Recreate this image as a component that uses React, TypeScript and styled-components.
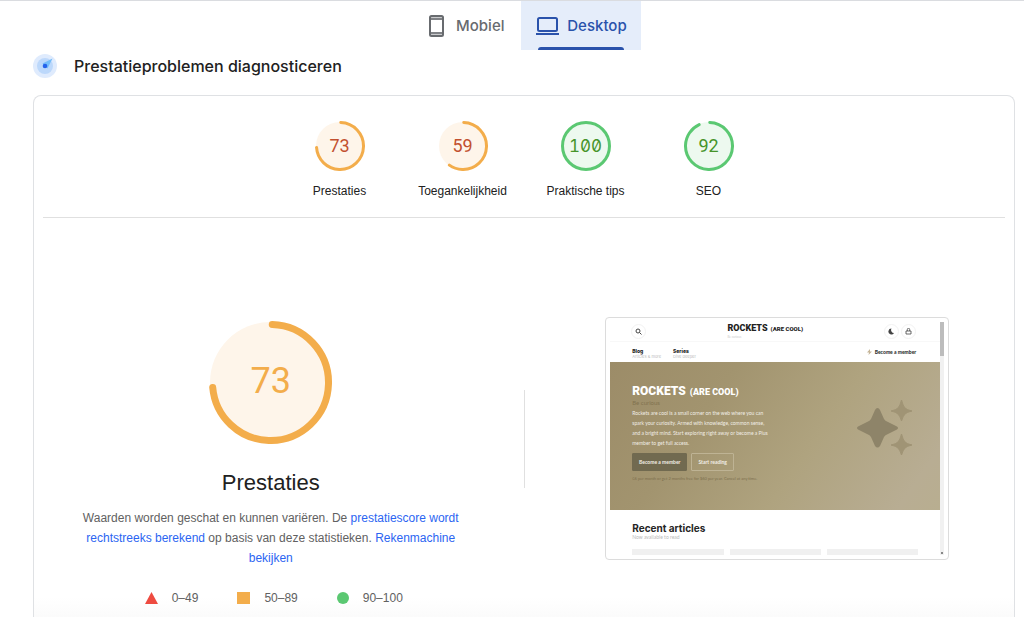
import React from "react";
import styled, { createGlobalStyle } from "styled-components";

const sans = `"Liberation Sans", Arial, sans-serif`;
const brand = `Inter, Roboto, sans-serif`;

const GlobalStyle = createGlobalStyle`
  *, *::before, *::after { box-sizing: border-box; }
  body { margin: 0; background: #fff; color: #212121; font-family: ${sans}; }
  h1, h2, h3, p { margin: 0; font-weight: 400; }
  a { color: #2b65f2; text-decoration: none; }
`;

const Page = styled.div`
  display: flex;
  flex-direction: column;
  min-height: 100vh;
  padding: 0 9px 0 33px;
  border-top: 1px solid #dadce0;
`;

const Tabs = styled.nav`
  display: flex;
  justify-content: center;
`;

const Tab = styled.button<{ $active?: boolean }>`
  display: flex;
  flex-direction: column;
  align-items: center;
  justify-content: flex-end;
  height: 49px;
  padding: 0 14px;
  border: 0;
  background: ${(p) => (p.$active ? "#e5edfa" : "transparent")};
  color: ${(p) => (p.$active ? "#2a52ab" : "#686b6f")};
  font: 500 15px ${brand};
`;

const TabLabel = styled.span`
  display: flex;
  align-items: center;
  gap: 8px;
  flex: 1;
`;

const TabBar = styled.span<{ $active?: boolean }>`
  width: 86px;
  height: 3px;
  margin-top: -3px;
  border-radius: 3px 3px 0 0;
  background: ${(p) => (p.$active ? "#2a52ab" : "transparent")};
`;

const Heading = styled.header`
  display: flex;
  align-items: center;
  gap: 17px;
  height: 32px;
  margin-bottom: 13px;
`;

const HeadingTitle = styled.h1`
  font: 500 16px/24px ${brand};
`;

const Card = styled.main`
  display: flex;
  flex-direction: column;
  flex: 1;
  padding: 0 9px;
  border: 1px solid #dfe1e4;
  border-bottom: 0;
  border-radius: 8px 8px 0 0;
  background: linear-gradient(to top, #fbfbfb, #fff 20px);
`;

const Scores = styled.section`
  display: flex;
  justify-content: center;
  height: 122px;
  padding-top: 25px;
  border-bottom: 1px solid #e0e0e0;
`;

const Score = styled.a`
  display: flex;
  flex-direction: column;
  align-items: center;
  width: 123px;
  color: #212121;
  font-size: 12px;
  line-height: 16px;
  gap: 12px;
`;

const Dial = styled.div<{ $size: number }>`
  display: grid;
  place-items: center;
  width: ${(p) => p.$size}px;
  height: ${(p) => p.$size}px;
  & > * { grid-area: 1 / 1; }
`;

const Value = styled.span<{ $color: string; $large?: boolean }>`
  padding-bottom: ${(p) => (p.$large ? 4 : 0)}px;
  color: ${(p) => p.$color};
  font-family: Roboto, sans-serif;
  font-weight: 400;
  font-size: ${(p) => (p.$large ? 36 : 18)}px;
  line-height: ${(p) => (p.$large ? 40 : 20)}px;
`;

const SlashedValue = styled(Value)`
  font-family: Inter, sans-serif;
  font-size: 17px;
  font-feature-settings: "zero", "tnum";
`;

const Report = styled.section`
  display: grid;
  grid-template-columns: 1fr 1px 1fr;
  column-gap: 25px;
  align-items: start;
  padding-top: 99px;
`;

const Summary = styled.div`
  display: flex;
  flex-direction: column;
  align-items: center;
  padding: 4px 0 8px;
`;

const SummaryTitle = styled.h2`
  margin: 25px 0 11px;
  font-size: 22px;
  line-height: 28px;
`;

const Description = styled.p`
  max-width: 400px;
  color: #616161;
  font-size: 12px;
  line-height: 20px;
  text-align: center;
`;

const Legend = styled.div`
  display: flex;
  gap: 39px;
  margin-top: 22px;
  padding-left: 6px;
  color: #616161;
  font-size: 12px;
  line-height: 16px;
`;

const LegendItem = styled.span`
  display: flex;
  align-items: center;
  gap: 14px;
`;

const Separator = styled.div`
  height: 98px;
  margin-top: 73px;
  background: #e0e0e0;
`;

const Frame = styled.figure`
  display: flex;
  width: 344px;
  max-width: 100%;
  height: 243px;
  margin: 0;
  padding: 4px;
  justify-self: center;
  border: 1px solid #dcdcdc;
  border-radius: 4px;
  overflow: hidden;
`;

const Site = styled.div`
  display: flex;
  flex-direction: column;
  flex: 1;
  min-width: 0;
  font-family: Lato, sans-serif;
  color: #252525;
`;

const Scrollbar = styled.div`
  display: flex;
  flex-direction: column;
  justify-content: space-between;
  width: 4px;
  background: #f1f1f1;
  &::before { content: ""; height: 34px; background: #bcbcbc; }
  &::after { content: ""; width: 2px; height: 2px; margin: 0 1px 1px; background: #888; }
`;

const SiteTop = styled.div`
  display: flex;
  justify-content: space-between;
  align-items: center;
  height: 20px;
  padding: 0 24px 0 21px;
  border-bottom: 1px solid #f8f8f8;
`;

const SiteActions = styled.div`
  display: flex;
  justify-content: flex-end;
  gap: 2px;
`;

const RoundButton = styled.button`
  display: grid;
  place-items: center;
  width: 15px;
  height: 15px;
  padding: 0;
  border: 1px solid #f2f2f2;
  border-radius: 50%;
  background: #fff;
  color: #444;
`;

const Logo = styled.div<{ $large?: boolean }>`
  display: flex;
  align-items: baseline;
  gap: ${(p) => (p.$large ? 4 : 3)}px;
  font-family: Roboto, sans-serif;
  font-weight: 900;
  font-size: ${(p) => (p.$large ? 12 : 9)}px;
  line-height: ${(p) => (p.$large ? 16 : 10)}px;
  color: ${(p) => (p.$large ? "#fff" : "#222")};
  white-space: nowrap;
  small { font-size: ${(p) => (p.$large ? 9 : 6)}px; }
`;

const Note = styled.p<{ $color: string; $size: number }>`
  color: ${(p) => p.$color};
  font-size: ${(p) => p.$size}px;
  line-height: 6px;
`;

const SiteNav = styled.nav`
  display: flex;
  gap: 12px;
  height: 20px;
  padding: 6px 24px 0 22px;
`;

const NavItem = styled.a`
  display: flex;
  flex-direction: column;
  color: #222;
  font: 800 5px/6px Inter, sans-serif;
`;

const Member = styled.a`
  display: flex;
  align-items: center;
  gap: 3px;
  height: 8px;
  margin-left: auto;
  color: #333;
  font: 900 5px/8px Lato, sans-serif;
`;

const Hero = styled.div`
  display: flex;
  justify-content: space-between;
  height: 148px;
  padding: 21px 27px 0 22px;
  background: linear-gradient(125deg, #9c8c68 0%, #a2946f 30%, #afa37f 60%, #b8ad93 90%, #b8ae90 100%);
`;

const HeroText = styled.p`
  margin-top: 2px;
  color: #f1eee6;
  font-size: 5px;
  line-height: 10px;
  white-space: nowrap;
`;

const HeroActions = styled.div`
  display: flex;
  gap: 4px;
  margin: 5px 0;
`;

const HeroButton = styled.button<{ $filled?: boolean }>`
  width: ${(p) => (p.$filled ? 55 : 43)}px;
  height: 18px;
  padding: 0;
  border: 1px solid ${(p) => (p.$filled ? "#716a50" : "#beb394")};
  border-radius: 1px;
  background: ${(p) => (p.$filled ? "#716a50" : "transparent")};
  color: #f1eee4;
  font: 700 5px Lato, sans-serif;
`;

const Recent = styled.div`
  display: flex;
  flex-direction: column;
  flex: 1;
  padding: 12px 22px 0;
`;

const RecentTitle = styled.h3`
  font: 700 10px/12px Inter, sans-serif;
`;

const Thumbs = styled.div`
  display: grid;
  grid-template-columns: repeat(3, 1fr);
  gap: 6px;
  margin-top: auto;
`;

const Thumb = styled.div`
  height: 6px;
  background: #f0f0f0;
`;

type Tone = { arc: string; fill: string };
const orange: Tone = { arc: "#f3ad4b", fill: "#fef5ea" };
const green: Tone = { arc: "#5bc872", fill: "#edf9ef" };

function Ring({ size, stroke, value, tone }: { size: number; stroke: number; value: number; tone: Tone }) {
  const r = (size - stroke) / 2;
  const length = 2 * Math.PI * r;
  const full = value === 100;
  return (
    <svg width={size} height={size} viewBox={`0 0 ${size} ${size}`} aria-hidden="true">
      <circle cx={size / 2} cy={size / 2} r={size / 2 - 1} fill={tone.fill} />
      <circle
        cx={size / 2}
        cy={size / 2}
        r={r}
        fill="none"
        stroke={tone.arc}
        strokeWidth={stroke}
        strokeLinecap="round"
        strokeDasharray={full ? undefined : `${(length * value) / 100} ${length}`}
        transform={`rotate(${-90 + (full ? 0 : (stroke / 4 / r) * 57.3)} ${size / 2} ${size / 2})`}
      />
    </svg>
  );
}

const scores = [
  { label: "Prestaties", value: 73, tone: orange, color: "#c2502f" },
  { label: "Toegankelijkheid", value: 59, tone: orange, color: "#c2502f" },
  { label: "Praktische tips", value: 100, tone: green, color: "#46942a" },
  { label: "SEO", value: 92, tone: green, color: "#46942a" },
];

export default function App() {
  return (
    <>
      <GlobalStyle />
      <Page>
        <Tabs>
          <Tab>
            <TabLabel>
              <svg width="24" height="24" viewBox="0 0 24 24" fill="none" stroke="currentColor" strokeWidth="2">
                <path d="M6 2h12v4H6zM6 18h12v4H6z" fill="currentColor" fillOpacity=".35" stroke="none" />
                <rect x="6" y="2" width="13" height="20" rx="1.5" />
                <path d="M6 5h13M6 19h13" strokeWidth="1.5" />
              </svg>
              Mobiel
            </TabLabel>
            <TabBar />
          </Tab>
          <Tab $active>
            <TabLabel>
              <svg width="24" height="24" viewBox="0 0 24 24" fill="none" stroke="currentColor" strokeWidth="2">
                <rect x="3" y="4" width="19" height="13" rx="1.5" />
                <path d="M1 20h23" />
              </svg>
              Desktop
            </TabLabel>
            <TabBar $active />
          </Tab>
        </Tabs>

        <Heading>
          <svg width="24" height="24" viewBox="0 0 24 24" aria-hidden="true">
            <circle cx="12" cy="12" r="12" fill="#dfebfd" />
            <circle cx="12" cy="12" r="8" fill="#bcd8fb" />
            <path d="M19.5 4.5 9.5 9.5l5 5z" fill="#74bdf9" />
            <circle cx="12" cy="12" r="2.3" fill="#2563eb" />
          </svg>
          <HeadingTitle>Prestatieproblemen diagnosticeren</HeadingTitle>
        </Heading>

        <Card>
          <Scores>
            {scores.map((s) => {
              const Number = s.value === 100 ? SlashedValue : Value;
              return (
                <Score key={s.label} href="#">
                  <Dial $size={50}>
                    <Ring size={50} stroke={3} value={s.value} tone={s.tone} />
                    <Number $color={s.color}>{s.value}</Number>
                  </Dial>
                  {s.label}
                </Score>
              );
            })}
          </Scores>

          <Report>
            <Summary>
              <Dial $size={123}>
                <Ring size={123} stroke={7} value={73} tone={orange} />
                <Value $large $color={orange.arc}>73</Value>
              </Dial>
              <SummaryTitle>Prestaties</SummaryTitle>
              <Description>
                Waarden worden geschat en kunnen variëren. De <a href="#">prestatiescore wordt rechtstreeks berekend</a> op
                basis van deze statistieken. <a href="#">Rekenmachine bekijken</a>
              </Description>
              <Legend>
                <LegendItem>
                  <svg width="13" height="12" viewBox="0 0 13 12"><path d="M6.5 0 13 12H0z" fill="#ee4b40" /></svg>
                  0–49
                </LegendItem>
                <LegendItem>
                  <svg width="13" height="12" viewBox="0 0 13 12"><path d="M0 0h13v12H0z" fill="#f3ad4b" /></svg>
                  50–89
                </LegendItem>
                <LegendItem>
                  <svg width="12" height="12" viewBox="0 0 12 12"><circle cx="6" cy="6" r="6" fill="#5bc872" /></svg>
                  90–100
                </LegendItem>
              </Legend>
            </Summary>

            <Separator />

            <Frame>
              <Site>
                <SiteTop>
                  <RoundButton aria-label="Search">
                    <svg width="7" height="7" viewBox="0 0 7 7" fill="none" stroke="currentColor">
                      <circle cx="3" cy="3" r="2" /><path d="m4.5 4.5 2 2" />
                    </svg>
                  </RoundButton>
                  <div>
                    <Logo>ROCKETS <small>(ARE COOL)</small></Logo>
                    <Note $color="#ccc" $size={3}>Be curious</Note>
                  </div>
                  <SiteActions>
                    <RoundButton aria-label="Dark mode">
                      <svg width="7" height="7" viewBox="0 0 7 7" fill="currentColor"><path d="M3.5.5A3 3 0 1 0 6 5 3 3 0 0 1 3.5.5" /></svg>
                    </RoundButton>
                    <RoundButton aria-label="Sign in">
                      <svg width="7" height="7" viewBox="0 0 7 7" fill="none" stroke="currentColor" strokeWidth=".8">
                        <path d="M1 3h5v3H1zM2.3 3V1.5a1.2 1.2 0 0 1 2.4 0V3" />
                      </svg>
                    </RoundButton>
                  </SiteActions>
                </SiteTop>
                <SiteNav>
                  <NavItem href="#">Blog<Note $color="#bbb" $size={4}>Articles &amp; more</Note></NavItem>
                  <NavItem href="#">Series<Note $color="#bbb" $size={4}>Dive deeper</Note></NavItem>
                  <Member href="#">
                    <svg width="5" height="6" viewBox="0 0 5 6"><path d="M3 0 0 3.5h2L1.5 6 5 2.5H3z" fill="#c5b597" /></svg>
                    Become a member
                  </Member>
                </SiteNav>
                <Hero>
                  <div>
                    <Logo $large>ROCKETS <small>(ARE COOL)</small></Logo>
                    <Note $color="#82734f" $size={6}>Be curious</Note>
                    <HeroText>
                      Rockets are cool is a small corner on the web where you can<br />
                      spark your curiosity. Armed with knowledge, common sense,<br />
                      and a bright mind. Start exploring right away or become a Plus<br />
                      member to get full access.
                    </HeroText>
                    <HeroActions>
                      <HeroButton $filled>Become a member</HeroButton>
                      <HeroButton>Start reading</HeroButton>
                    </HeroActions>
                    <Note $color="#7d6f4d" $size={4}>€6 per month or get 2 months free for $60 per year. Cancel at any time.</Note>
                  </div>
                  <svg width="56" height="86" viewBox="0 0 56 86" aria-hidden="true">
                    <path d="M20.5 25Q22 25 23 27L27 36Q28 38 31 39L40 43.5Q42 45 40 46.5L31 51Q28 52 27 54L23 63Q20.5 66 18 63L14 54Q13 52 10 51L1 46.5Q-1 45 1 43.5L10 39Q13 38 14 36L18 27Q19 25 20.5 25Z" fill="#8e8469" />
                    <path d="M44.5 17Q46 23 48 25T55 28Q50 29 48 31T44.5 38Q43 33 41 31T34 28Q39 27 41 25T44.5 17ZM44.5 51Q46 57 48 59T55 62Q50 63 48 65T44.5 72Q43 67 41 65T34 62Q39 61 41 59T44.5 51Z" fill="#a09475" stroke="#a09475" />
                  </svg>
                </Hero>
                <Recent>
                  <RecentTitle>Recent articles</RecentTitle>
                  <Note $color="#bbb" $size={5}>Now available to read</Note>
                  <Thumbs><Thumb /><Thumb /><Thumb /></Thumbs>
                </Recent>
              </Site>
              <Scrollbar />
            </Frame>
          </Report>
        </Card>
      </Page>
    </>
  );
}
